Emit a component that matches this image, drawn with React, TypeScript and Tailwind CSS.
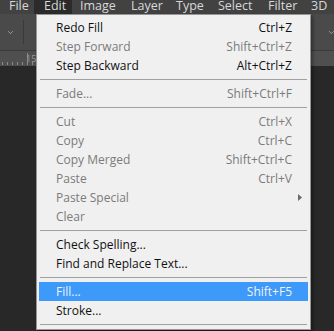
import { ChevronDown } from 'lucide-react';

type Item =
  | { kind: 'sep' }
  | { kind: 'item'; label: string; shortcut?: string; disabled?: boolean; active?: boolean; sub?: boolean };

const MENU_BAR = [
  { label: 'File', w: 'w-[34px]', pl: 'pl-[9px]' },
  { label: 'Edit', w: 'w-[38px]', pl: 'pl-[10px]', open: true },
  { label: 'Image', w: 'w-[51px]', pl: 'pl-[8px]' },
  { label: 'Layer', w: 'w-[45px]', pl: 'pl-[8px]' },
  { label: 'Type', w: 'w-[42px]', pl: 'pl-[8px]' },
  { label: 'Select', w: 'w-[50px]', pl: 'pl-[8px]' },
  { label: 'Filter', w: 'w-[43px]', pl: 'pl-[8px]' },
  { label: '3D', w: 'w-[30px]', pl: 'pl-[8px]' },
];

const ITEMS: Item[] = [
  { kind: 'item', label: 'Redo Fill', shortcut: 'Ctrl+Z' },
  { kind: 'item', label: 'Step Forward', shortcut: 'Shift+Ctrl+Z', disabled: true },
  { kind: 'item', label: 'Step Backward', shortcut: 'Alt+Ctrl+Z' },
  { kind: 'sep' },
  { kind: 'item', label: 'Fade...', shortcut: 'Shift+Ctrl+F', disabled: true },
  { kind: 'sep' },
  { kind: 'item', label: 'Cut', shortcut: 'Ctrl+X', disabled: true },
  { kind: 'item', label: 'Copy', shortcut: 'Ctrl+C', disabled: true },
  { kind: 'item', label: 'Copy Merged', shortcut: 'Shift+Ctrl+C', disabled: true },
  { kind: 'item', label: 'Paste', shortcut: 'Ctrl+V', disabled: true },
  { kind: 'item', label: 'Paste Special', disabled: true, sub: true },
  { kind: 'item', label: 'Clear', disabled: true },
  { kind: 'sep' },
  { kind: 'item', label: 'Check Spelling...' },
  { kind: 'item', label: 'Find and Replace Text...' },
  { kind: 'sep' },
  { kind: 'item', label: 'Fill...', shortcut: 'Shift+F5', active: true },
  { kind: 'item', label: 'Stroke...' },
  { kind: 'sep' },
];

const TICKS = Array.from({ length: 60 });

function MenuRow({ item }: { item: Item }) {
  if (item.kind === 'sep') {
    return (
      <div className="h-[9px] flex items-center px-[3px]">
        <div className="w-full h-px bg-[#a0a0a0]" />
      </div>
    );
  }
  const color = item.active ? 'text-[#f2f2f2]' : item.disabled ? 'text-[#7b7b7b]' : 'text-[#101010]';
  return (
    <div className={`h-[19px] mx-[2px] flex items-center pl-[17px] pr-[16px] ${item.active ? 'bg-[#3d9afa]' : ''} ${color}`}>
      <span className="flex-1">{item.label}</span>
      {item.shortcut && <span>{item.shortcut}</span>}
      {item.sub && (
        <svg width="4" height="7" viewBox="0 0 4 7" className="mr-[-10px]">
          <path d="M0 0 L4 3.5 L0 7 Z" fill="#6a6a6a" />
        </svg>
      )}
    </div>
  );
}

export default function App() {
  return (
    <div
      className="relative w-[334px] h-[331px] overflow-hidden bg-[#282828] flex flex-col"
      style={{ fontFamily: '"Open Sans", "Noto Sans", sans-serif' }}
    >
      {/* menu bar */}
      <div className="h-[14px] bg-[#424242] flex text-[12.5px] leading-[11px] text-[#d8d8d8]">
        {MENU_BAR.map((m) => (
          <div key={m.label} className={`${m.w} ${m.pl} h-full ${m.open ? 'bg-[#2b2b2b]' : ''}`}>
            {m.label}
          </div>
        ))}
      </div>

      {/* options bar */}
      <div className="h-[36px] bg-[#4a4a4a] flex items-center">
        <ChevronDown className="w-[9px] h-[9px] text-[#b5b5b5] ml-[6px]" strokeWidth={2} />
        <div className="w-px h-[24px] bg-[#3a3a3a] ml-[8px]" />
        <div className="flex-1" />
        <ChevronDown className="w-[9px] h-[9px] text-[#b5b5b5] mr-[-2px]" strokeWidth={2} />
      </div>

      {/* ruler */}
      <div className="relative h-[16px] bg-[#4f4f4f] border-t border-[#3a3a3a]">
        <div className="h-full flex items-end gap-[4px] pl-[2px] pb-[1px]">
          {TICKS.map((_, i) => (
            <div key={i} className={`w-px shrink-0 bg-[#8a8a8a] ${i === 5 ? 'h-[12px]' : 'h-[3px]'}`} />
          ))}
        </div>
        <span className="absolute left-[26px] top-[2px] text-[9px] leading-[12px] text-[#9a9a9a]">15</span>
      </div>

      <div className="flex-1 bg-[#282828]" />

      {/* Edit dropdown */}
      <div className="absolute left-[36px] top-[14px] w-[275px] pt-[3px] bg-[#f0f0f0] border border-[#979797] text-[12px] shadow-[2px_2px_3px_rgba(0,0,0,0.35)]">
        {ITEMS.map((it, i) => (
          <MenuRow key={i} item={it} />
        ))}
      </div>
    </div>
  );
}
